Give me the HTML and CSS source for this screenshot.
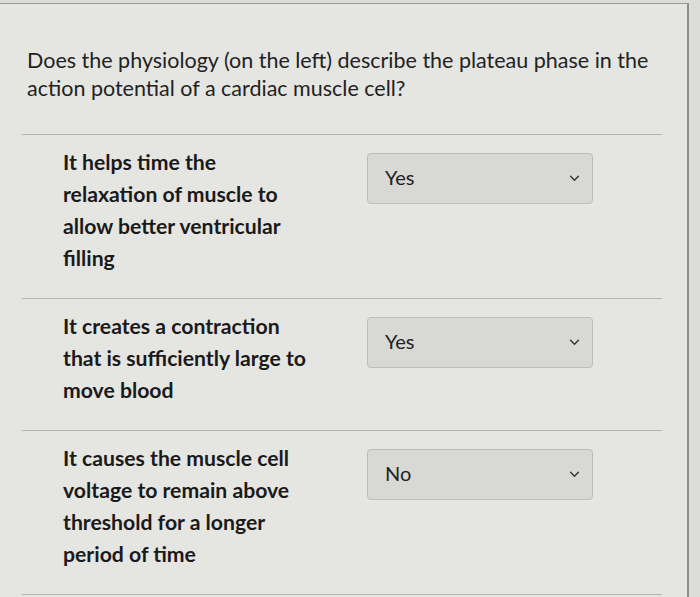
FILE: index.html
```html
<!DOCTYPE html>
<html>
<head>
<meta charset="utf-8">
<link rel="stylesheet" href="styles.css">
</head>
<body>
<div class="card">
  <p class="question">Does the physiology (on the left) describe the plateau phase in the action potential of a cardiac muscle cell?</p>
  <div class="rows">
    <div class="row">
      <div class="stmt">It helps time the<br>relaxation of muscle to<br>allow better ventricular<br>filling</div>
      <div class="select"><span>Yes</span><svg class="chev" viewBox="0 0 12 8" width="11" height="7"><path d="M1.5 1.5 L6 6 L10.5 1.5" fill="none" stroke="#333" stroke-width="1.6" stroke-linecap="round" stroke-linejoin="round"/></svg></div>
    </div>
    <div class="row">
      <div class="stmt">It creates a contraction<br>that is sufficiently large to<br>move blood</div>
      <div class="select"><span>Yes</span><svg class="chev" viewBox="0 0 12 8" width="11" height="7"><path d="M1.5 1.5 L6 6 L10.5 1.5" fill="none" stroke="#333" stroke-width="1.6" stroke-linecap="round" stroke-linejoin="round"/></svg></div>
    </div>
    <div class="row">
      <div class="stmt">It causes the muscle cell<br>voltage to remain above<br>threshold for a longer<br>period of time</div>
      <div class="select"><span>No</span><svg class="chev" viewBox="0 0 12 8" width="11" height="7"><path d="M1.5 1.5 L6 6 L10.5 1.5" fill="none" stroke="#333" stroke-width="1.6" stroke-linecap="round" stroke-linejoin="round"/></svg></div>
    </div>
  </div>
</div>
</body>
</html>
```
FILE: styles.css
```css
html, body {
  margin: 0;
  padding: 0;
  background: #dcdcd9;
  height: 100%;
  overflow: hidden;
}
body {
  font-family: Lato, "Open Sans", sans-serif;
  color: #1c1c1c;
}
.card {
  margin-top: 3px;
  width: 689px;
  height: 600px;
  background: #e5e5e2;
  border-top: 1px solid #9a9a98;
  border-right: 2px solid #8e8e8c;
  box-sizing: border-box;
}
.question {
  margin: 0;
  padding: 42px 20px 0 27px;
  font-size: 21.5px;
  line-height: 28px;
  color: #222;
}
.rows {
  margin: 32px 0 0 22px;
  width: 640px;
  border-top: 1px solid #b5b5b2;
}
.row {
  display: flex;
  align-items: flex-start;
  padding: 11px 0 24px 41px;
  border-bottom: 1px solid #b5b5b2;
}
.stmt {
  width: 260px;
  font-size: 21.2px;
  font-weight: 700;
  line-height: 32px;
  color: #1a1a1a;
  white-space: nowrap;
}
.select {
  margin-left: 44px;
  margin-top: 7px;
  width: 226px;
  height: 51px;
  box-sizing: border-box;
  display: flex;
  align-items: center;
  justify-content: space-between;
  padding: 0 12px 0 17px;
  background: #d8d8d5;
  border: 1px solid #bdbdba;
  border-radius: 4px;
  font-size: 20px;
  color: #222;
}
.select span {
  margin-top: -3px;
}
.chev {
  display: block;
}
```
